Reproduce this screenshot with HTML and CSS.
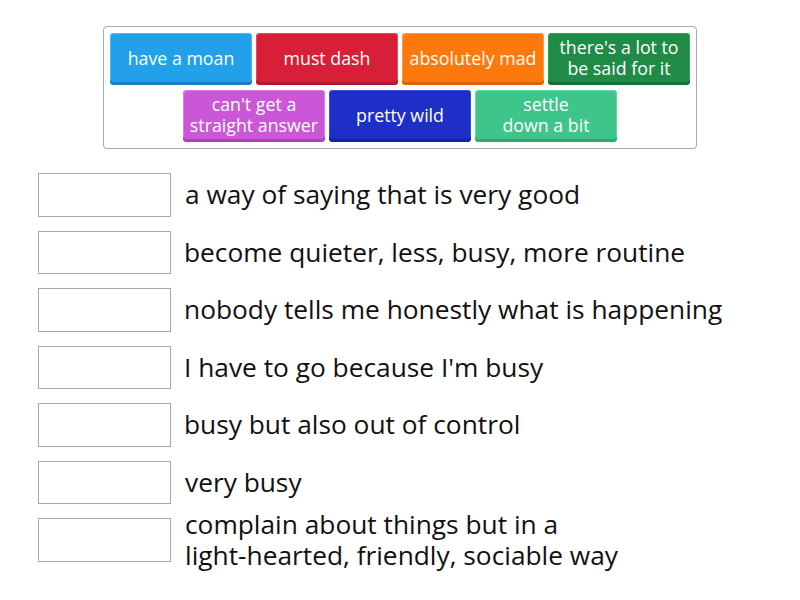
FILE: index.html
```html
<!DOCTYPE html>
<html>
<head>
<meta charset="utf-8">
<link rel="stylesheet" href="styles.css">
</head>
<body>
<div class="page">
  <div class="bank">
    <div class="bank-row">
      <div class="tile blue">have a moan</div>
      <div class="tile red">must dash</div>
      <div class="tile orange">absolutely mad</div>
      <div class="tile green">there's a lot to<br>be said for it</div>
    </div>
    <div class="bank-row">
      <div class="tile purple">can't get a<br>straight answer</div>
      <div class="tile navy">pretty wild</div>
      <div class="tile mint">settle<br>down a bit</div>
    </div>
  </div>
  <div class="list">
    <div class="item"><div class="slot"></div><div class="def first">a way of saying that is very good</div></div>
    <div class="item"><div class="slot"></div><div class="def">become quieter, less, busy, more routine</div></div>
    <div class="item"><div class="slot"></div><div class="def">nobody tells me honestly what is happening</div></div>
    <div class="item"><div class="slot"></div><div class="def">I have to go because I'm busy</div></div>
    <div class="item"><div class="slot"></div><div class="def">busy but also out of control</div></div>
    <div class="item"><div class="slot"></div><div class="def first">very busy</div></div>
    <div class="item"><div class="slot"></div><div class="def first">complain about things but in a<br>light-hearted, friendly, sociable way</div></div>
  </div>
</div>
</body>
</html>
```

FILE: styles.css
```css
html, body {
  margin: 0;
  padding: 0;
  background: #ffffff;
}
body {
  font-family: "Open Sans", "Liberation Sans", sans-serif;
  color: #111111;
}
.page {
  width: 800px;
  height: 600px;
  padding-top: 26px;
  box-sizing: border-box;
}
.bank {
  width: 580px;
  margin: 0 auto;
  padding: 6px;
  border: 1px solid #a8a8a8;
  border-radius: 4px;
  display: flex;
  flex-direction: column;
  gap: 5px;
}
.bank-row {
  display: flex;
  justify-content: center;
  gap: 4px;
}
.tile {
  width: 142px;
  height: 52px;
  box-sizing: border-box;
  border-radius: 4px;
  display: flex;
  align-items: center;
  justify-content: center;
  text-align: center;
  color: #ffffff;
  font-size: 17.8px;
  line-height: 21px;
  padding-bottom: 2px;
  white-space: nowrap;
}
.blue { background: #22a0ea; box-shadow: inset 0 -3px 0 #1a80c6, inset 1px 1px 0 #4cbaf6, inset -1px 0 0 #4cbaf6; }
.red { background: #d71f37; box-shadow: inset 0 -3px 0 #b3182c, inset 1px 1px 0 #ec4a5c, inset -1px 0 0 #ec4a5c; }
.orange { background: #fd790d; box-shadow: inset 0 -3px 0 #de600a, inset 1px 1px 0 #ff9c42, inset -1px 0 0 #ff9c42; }
.green { background: #1f8b46; box-shadow: inset 0 -3px 0 #166f37, inset 1px 1px 0 #31a55d, inset -1px 0 0 #31a55d; }
.purple { background: #cb56d7; box-shadow: inset 0 -3px 0 #aa43b5, inset 1px 1px 0 #de7de8, inset -1px 0 0 #de7de8; }
.navy { background: #1d2fc7; box-shadow: inset 0 -3px 0 #1524a0, inset 1px 1px 0 #3a4ee2, inset -1px 0 0 #3a4ee2; }
.mint { background: #3ec58a; box-shadow: inset 0 -3px 0 #2ea872, inset 1px 1px 0 #62d9a3, inset -1px 0 0 #62d9a3; }
.list {
  margin-top: 24px;
  padding-left: 38px;
  display: flex;
  flex-direction: column;
  gap: 14px;
}
.item {
  display: flex;
  align-items: center;
  height: 43.5px;
}
.slot {
  width: 133px;
  height: 43.5px;
  box-sizing: border-box;
  border: 1px solid #a9a9a9;
  flex: none;
  box-shadow: 0 0 2px rgba(0,0,0,0.06);
}
.def {
  margin-left: 13px;
  font-size: 26.3px;
  line-height: 31px;
  white-space: nowrap;
}
.def.first {
  margin-left: 14px;
}
```
